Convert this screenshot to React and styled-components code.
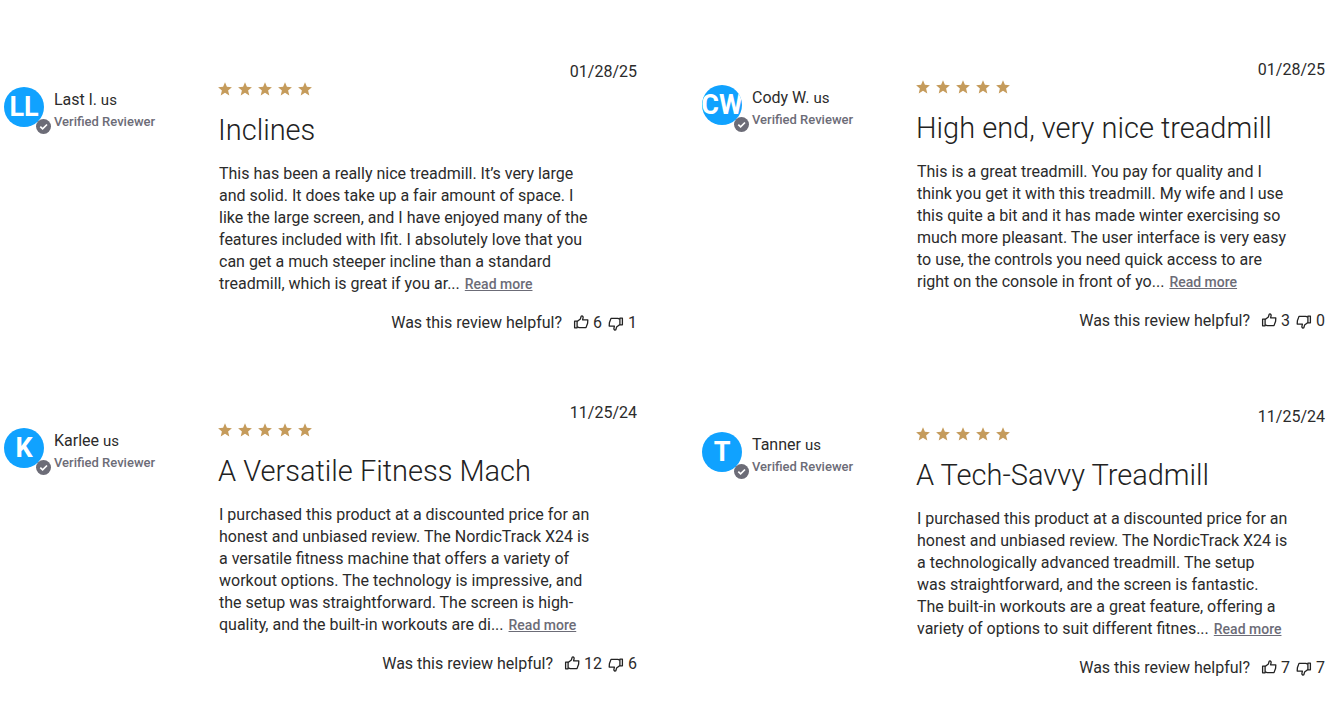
import styled, { createGlobalStyle } from 'styled-components';

const leftReviews = [
  {
    id: 'last-l',
    name: 'Last l.',
    initials: 'LL',
    date: '01/28/25',
    title: 'Inclines',
    lines: [
      'This has been a really nice treadmill. It’s very large',
      'and solid. It does take up a fair amount of space. I',
      'like the large screen, and I have enjoyed many of the',
      'features included with Ifit. I absolutely love that you',
      'can get a much steeper incline than a standard',
      'treadmill, which is great if you ar...',
    ],
    up: 6,
    down: 1,
  },
  {
    id: 'karlee',
    name: 'Karlee',
    initials: 'K',
    date: '11/25/24',
    title: 'A Versatile Fitness Mach',
    lines: [
      'I purchased this product at a discounted price for an',
      'honest and unbiased review. The NordicTrack X24 is',
      'a versatile fitness machine that offers a variety of',
      'workout options. The technology is impressive, and',
      'the setup was straightforward. The screen is high-',
      'quality, and the built-in workouts are di...',
    ],
    up: 12,
    down: 6,
  },
];

const rightReviews = [
  {
    id: 'cody-w',
    name: 'Cody W.',
    initials: 'CW',
    date: '01/28/25',
    title: 'High end, very nice treadmill',
    lines: [
      'This is a great treadmill. You pay for quality and I',
      'think you get it with this treadmill. My wife and I use',
      'this quite a bit and it has made winter exercising so',
      'much more pleasant. The user interface is very easy',
      'to use, the controls you need quick access to are',
      'right on the console in front of yo...',
    ],
    up: 3,
    down: 0,
  },
  {
    id: 'tanner',
    name: 'Tanner',
    initials: 'T',
    date: '11/25/24',
    title: 'A Tech-Savvy Treadmill',
    lines: [
      'I purchased this product at a discounted price for an',
      'honest and unbiased review. The NordicTrack X24 is',
      'a technologically advanced treadmill. The setup',
      'was straightforward, and the screen is fantastic.',
      'The built-in workouts are a great feature, offering a',
      'variety of options to suit different fitnes...',
    ],
    up: 7,
    down: 7,
  },
];

const Star = () => (
  <svg width="14" height="14" viewBox="0 0 14 14" aria-hidden="true">
    <path
      fill="#c59b5b"
      d="M7 0.2 L8.9 4.8 L13.9 5.2 L10.1 8.4 L11.3 13.4 L7 10.7 L2.7 13.4 L3.9 8.4 L0.1 5.2 L5.1 4.8 Z"
    />
  </svg>
);

const Thumb = ({ down }) => (
  <ThumbSvg $down={down} width="16" height="16" viewBox="0 0 16 16" aria-hidden="true">
    <path d="M1.6 6.2H4.1V12.8H1.6Z" />
    <path d="M4.1 6.6L7.4 3.9L8.2 1.2C8.9 0.6 10.3 1.2 10.1 2.6L9.6 4.9H14.8L14.6 8.2L13 12.6H6.2L4.1 11.8" />
  </ThumbSvg>
);

const Review = ({ review }) => {
  const { name, initials, date, title, lines, up, down } = review;
  const lastLine = lines.length - 1;

  return (
    <Card>
      <Author>
        <AvatarWrap>
          <Avatar>{initials}</Avatar>
          <Badge viewBox="0 0 15 15" aria-hidden="true">
            <circle cx="7.5" cy="7.5" r="7.5" fill="#6c6c77" />
            <path d="M4.3 7.7L6.6 9.9L11 5.5" fill="none" stroke="#fff" strokeWidth="1.7" />
          </Badge>
        </AvatarWrap>
        <div>
          <Name>
            {name} <Country>us</Country>
          </Name>
          <Verified>Verified Reviewer</Verified>
        </div>
      </Author>
      <Main>
        <ReviewDate>{date}</ReviewDate>
        <Stars role="img" aria-label="5 out of 5 stars">
          {[1, 2, 3, 4, 5].map((n) => (
            <Star key={n} />
          ))}
        </Stars>
        <Title>{title}</Title>
        <Body>
          {lines.map((line, i) => (
            <Line key={line}>
              {line}
              {i === lastLine && <ReadMore href="#">Read more</ReadMore>}
            </Line>
          ))}
        </Body>
        <Helpful>
          <Question>Was this review helpful?</Question>
          <Vote type="button" aria-label={`Helpful, ${up}`}>
            <Thumb />
            {up}
          </Vote>
          <Vote type="button" aria-label={`Not helpful, ${down}`}>
            <Thumb down />
            {down}
          </Vote>
        </Helpful>
      </Main>
    </Card>
  );
};

const App = () => {
  return (
    <>
      <GlobalStyle />
      <Page>
        <Column $top={60} $gap={67}>
          {leftReviews.map((review) => (
            <Review key={review.id} review={review} />
          ))}
        </Column>
        <Column $top={58} $gap={73}>
          {rightReviews.map((review) => (
            <Review key={review.id} review={review} />
          ))}
        </Column>
      </Page>
    </>
  );
};

export default App;

const GlobalStyle = createGlobalStyle`
  * {
    box-sizing: border-box;
  }

  body {
    margin: 0;
    background: #fff;
    color: #2b2b2b;
    font-family: Roboto, 'Liberation Sans', sans-serif;
    font-size: 16px;
    line-height: 22px;
  }
`;

const Page = styled.main`
  display: grid;
  grid-template-columns: 633fr 623fr;
  column-gap: 65px;
  padding: 0 19px 0 4px;
`;

const Column = styled.div`
  display: flex;
  flex-direction: column;
  gap: ${({ $gap }) => $gap}px;
  padding-top: ${({ $top }) => $top}px;
`;

const Card = styled.article`
  display: flex;
`;

const Author = styled.div`
  display: flex;
  flex: none;
  gap: 10px;
  width: 214px;
  padding-top: 27px;
`;

const AvatarWrap = styled.div`
  position: relative;
  width: 40px;
  height: 40px;
`;

const Avatar = styled.div`
  display: flex;
  align-items: center;
  justify-content: center;
  height: 40px;
  border-radius: 50%;
  overflow: hidden;
  background: #10a2ff;
  color: #fff;
  font-size: 27px;
  font-weight: 700;
`;

const Badge = styled.svg`
  position: absolute;
  right: -7px;
  bottom: -7px;
  width: 15px;
  height: 15px;
`;

const Name = styled.div`
  padding-top: 2px;
`;

const Country = styled.span`
  font-size: 15px;
`;

const Verified = styled.div`
  color: #6c6c77;
  font-size: 13px;
  font-weight: 500;
`;

const Main = styled.div`
  flex: 1;
  min-width: 0;
`;

const ReviewDate = styled.div`
  padding-top: 2px;
  line-height: 20px;
  text-align: right;
`;

const Stars = styled.div`
  display: flex;
  gap: 6px;
`;

const Title = styled.h2`
  margin: 16px 0 15px;
  color: #222;
  font-size: 29px;
  font-weight: 300;
  line-height: 36px;
`;

const Body = styled.p`
  margin: 0;
  padding-left: 1px;
`;

const Line = styled.span`
  display: block;
`;

const ReadMore = styled.a`
  margin-left: 5px;
  color: #6c6c77;
  font-size: 14px;
  font-weight: 500;
`;

const Helpful = styled.div`
  display: flex;
  justify-content: flex-end;
  gap: 6px;
  margin-top: 17px;
`;

const Question = styled.span`
  margin-right: 5px;
`;

const Vote = styled.button`
  display: flex;
  align-items: center;
  gap: 4px;
  padding: 0;
  border: 0;
  background: none;
  color: inherit;
  font: inherit;
  cursor: pointer;
`;

const ThumbSvg = styled.svg`
  fill: none;
  stroke: #222;
  stroke-width: 1.3;
  stroke-linejoin: round;
  transform: ${({ $down }) => ($down ? 'rotate(180deg)' : 'none')};
`;
